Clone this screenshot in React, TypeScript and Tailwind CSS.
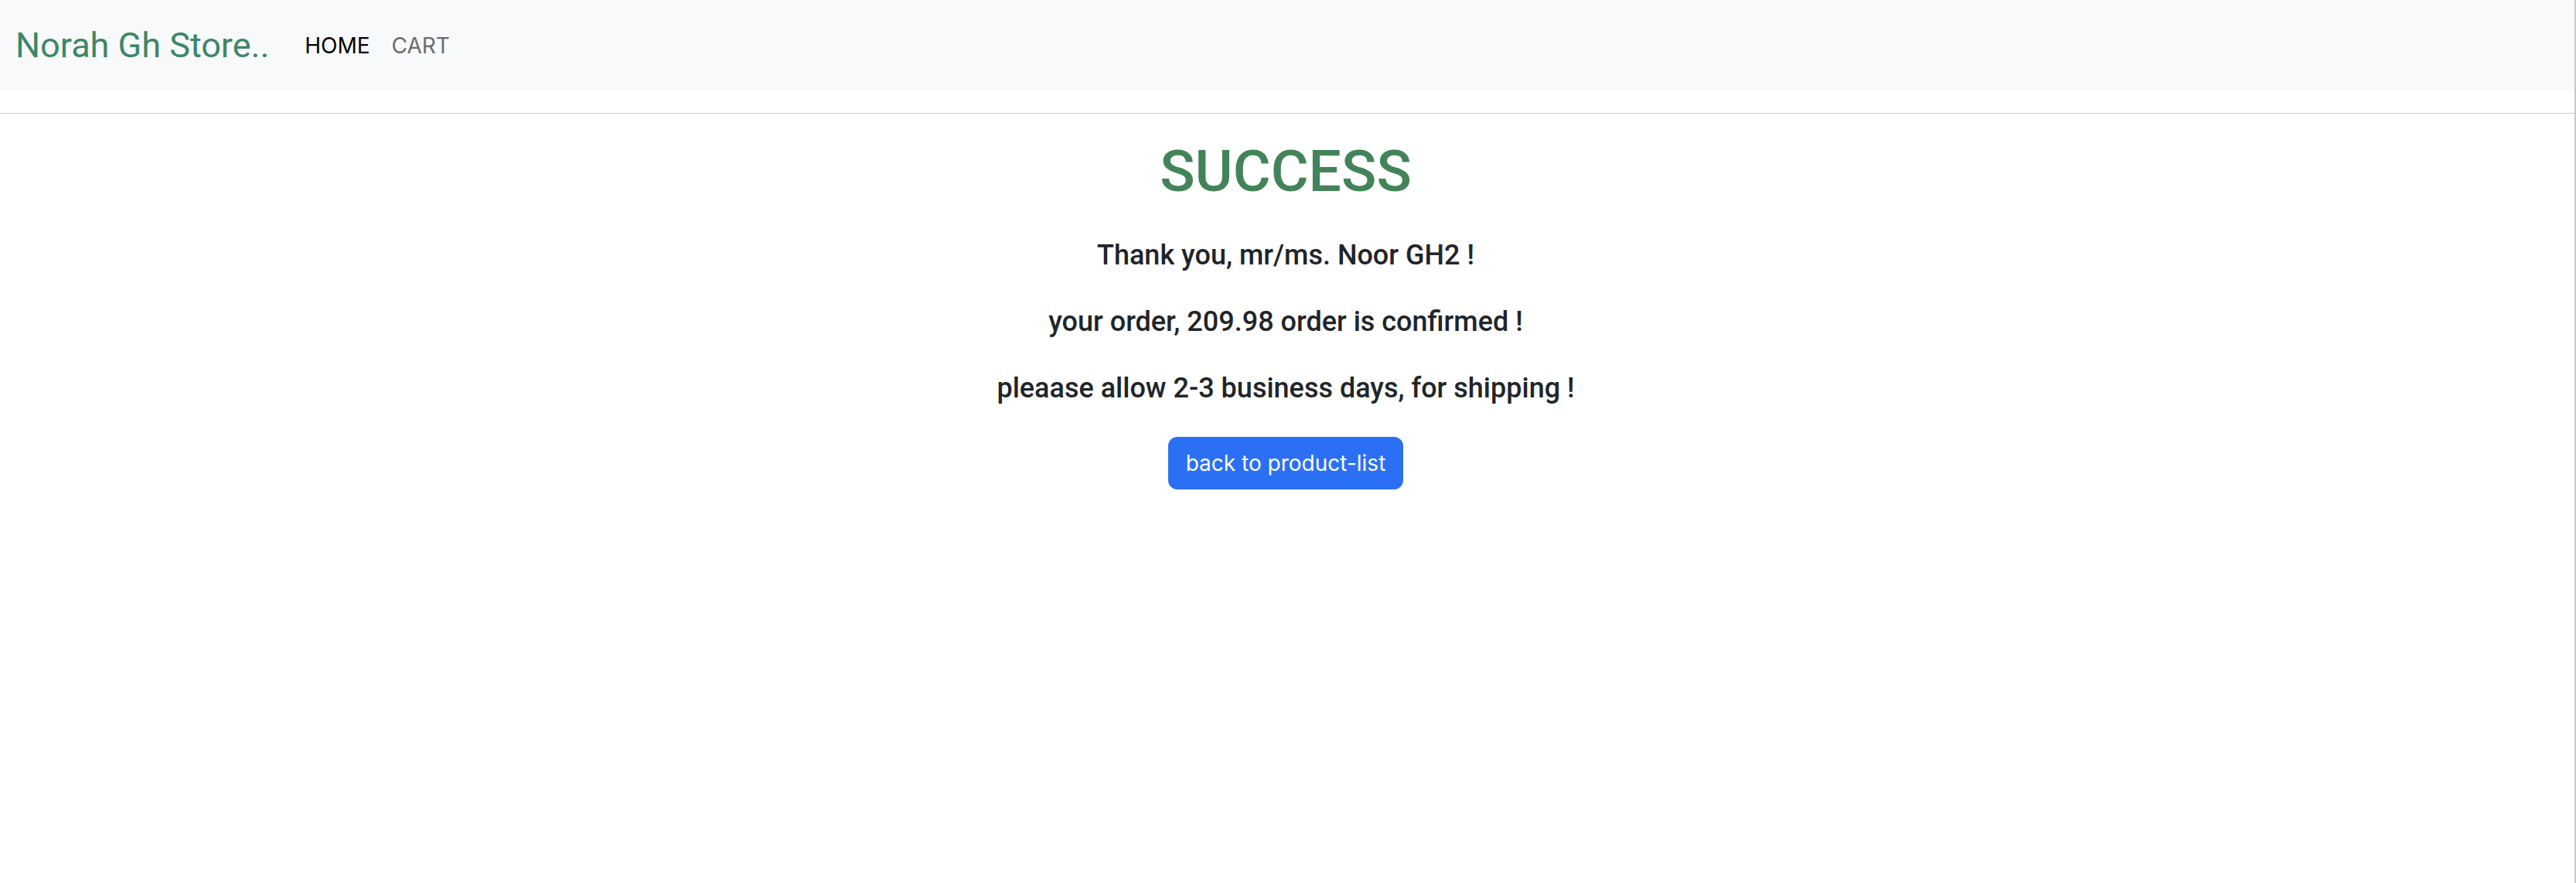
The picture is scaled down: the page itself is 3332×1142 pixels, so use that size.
export default function App() {
  return (
    <div className="min-h-screen border-r-2 border-[#c8c8cc] bg-white font-['Inter',sans-serif] text-[#212529]">
      <nav className="flex items-center bg-[#f8f9fb] px-5 py-4">
        <a href="#" className="mr-8 py-2 font-['Roboto',sans-serif] text-[45px] leading-[69px] text-[#3c8765]">Norah Gh Store..</a>
        <ul className="flex text-[28px] leading-[48px]">
          <li><a href="#" className="block px-[14px] text-black">HOME</a></li>
          <li><a href="#" className="block px-[14px] text-[#6b6c6d]">CART</a></li>
        </ul>
      </nav>
      <hr className="mt-[29px] border-t border-[#c8c8c8]" />
      <main className="flex flex-col items-center pt-8 pr-1 text-center">
        <h1 className="mb-6 font-['Roboto',sans-serif] text-[75px] leading-[84px] font-medium text-[#428458]">SUCCESS</h1>
        <div className="flex flex-col gap-10 py-5 font-['Roboto',sans-serif] text-[36px] leading-[46px] font-medium">
          <h5>Thank you, mr/ms. Noor GH2 !</h5>
          <h5>your order, 209.98 order is confirmed !</h5>
          <h5>pleaase allow 2-3 business days, for shipping !</h5>
        </div>
        <button type="button" className="mt-5 rounded-xl bg-[#2b70f4] px-[23px] py-3 text-[28px] leading-[44px] text-white">back to product-list</button>
      </main>
    </div>
  );
}
